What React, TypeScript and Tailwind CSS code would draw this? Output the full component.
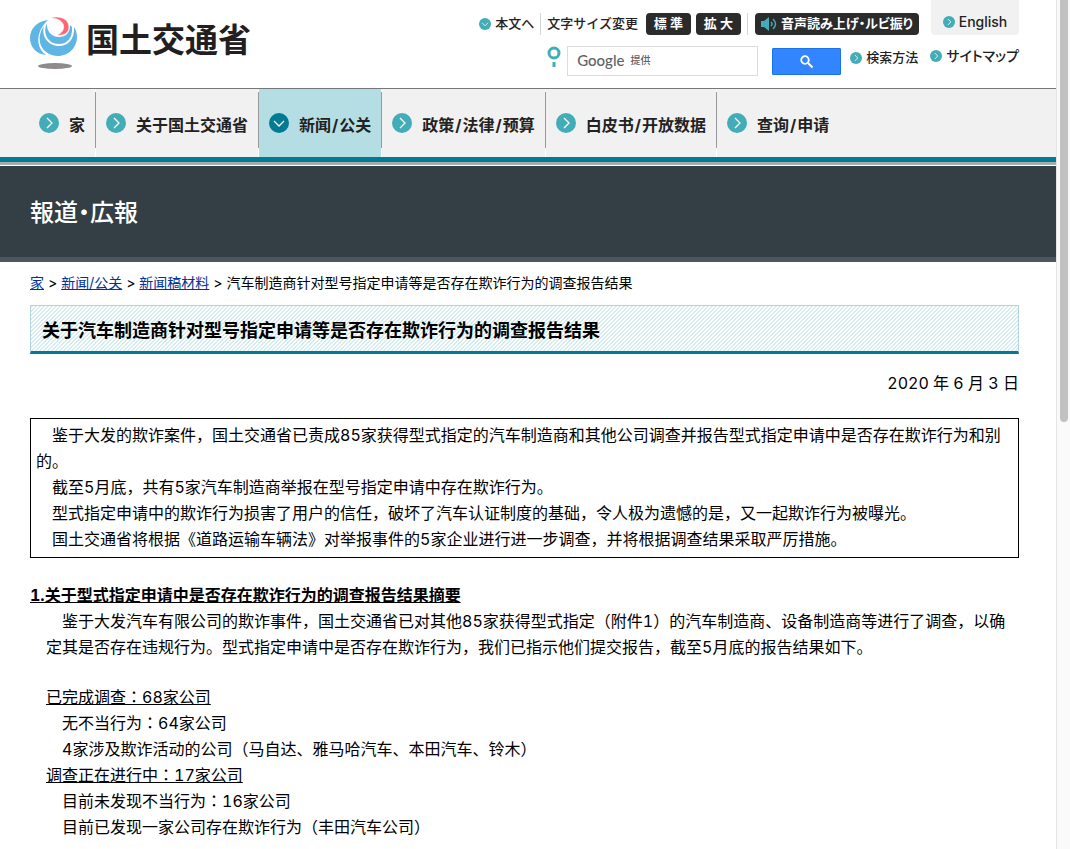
import React from "react";

type CircleIconProps = {
  size: number;
  down?: boolean;
  dark?: boolean;
};

const navItems = [
  { label: "家", active: false },
  { label: "关于国土交通省", active: false },
  { label: "新闻/公关", active: true },
  { label: "政策/法律/预算", active: false },
  { label: "白皮书/开放数据", active: false },
  { label: "查询/申请", active: false },
];

const breadcrumbs = ["家", "新闻/公关", "新闻稿材料"];

const noticeLines = [
  "鉴于大发的欺诈案件，国土交通省已责成85家获得型式指定的汽车制造商和其他公司调查并报告型式指定申请中是否存在欺诈行为和别的。",
  "截至5月底，共有5家汽车制造商举报在型号指定申请中存在欺诈行为。",
  "型式指定申请中的欺诈行为损害了用户的信任，破坏了汽车认证制度的基础，令人极为遗憾的是，又一起欺诈行为被曝光。",
  "国土交通省将根据《道路运输车辆法》对举报事件的5家企业进行进一步调查，并将根据调查结果采取严厉措施。",
];

const CircleIcon = ({ size, down, dark }: CircleIconProps) => {
  return (
    <svg
      width={size}
      height={size}
      viewBox="0 0 20 20"
      className="shrink-0"
      aria-hidden="true"
    >
      <circle cx="10" cy="10" r="10" fill={dark ? "#007b93" : "#42adb9"} />
      <path
        d={down ? "M5 8l5 5 5-5" : "M8 5l5 5-5 5"}
        fill="none"
        stroke="#fff"
        strokeWidth="1.3"
      />
    </svg>
  );
};

const Logo = () => {
  return (
    <a href="#" className="mt-4 flex items-start gap-2 text-[#231f20]">
      <svg width="48" height="54" viewBox="0 0 48 54" aria-hidden="true">
        <path
          d="M18 4C7 5 0 13 0 22c0 9 6 16 16 17C6 32 5 16 18 4z"
          fill="#5fb6e5"
        />
        <path
          d="M14 10C5 22 10 39 28 40c11 0 19-9 19-19 0-4-1-7-3-10 1 12-6 19-15 19C18 30 11 20 14 10z"
          fill="#5fb6e5"
        />
        <path
          d="M17 7c-5 10 1 21 12 21 8 0 14-6 13-17l-2-2c0 8-4 12-11 12-8 0-13-7-12-14z"
          fill="#5fb6e5"
        />
        <path
          d="M20 2C28-1 39 2 39 11c0 6-5 9-12 8 5-2 8-6 6-11-2-4-7-6-13-6z"
          fill="#ff6673"
          stroke="#fff"
          strokeWidth="0.6"
        />
        <ellipse cx="25" cy="50" rx="17" ry="3" fill="#8f8b8c" />
      </svg>
      <span className="text-[33px] leading-[48px] font-bold">国土交通省</span>
    </a>
  );
};

const HeaderTools = () => {
  return (
    <div className="flex flex-col text-[13px] font-medium">
      <div className="flex items-start justify-end">
        <div className="mt-3 flex h-6 items-center">
          <a href="#" className="flex items-center gap-1">
            <CircleIcon size={12} down />
            本文へ
          </a>
          <span className="mx-1.5 h-[22px] w-px bg-gray-300" />
          <span>文字サイズ変更</span>
          <button className="ml-2 h-[22px] w-[45px] rounded-sm bg-[#2b2b2b] font-bold text-white">
            標 準
          </button>
          <button className="ml-[5px] h-[22px] w-[45px] rounded-sm bg-[#2b2b2b] font-bold text-white">
            拡 大
          </button>
          <span className="mx-1.5 h-[22px] w-px bg-gray-300" />
          <button className="ml-px flex h-[22px] items-center gap-1 rounded-sm bg-[#2b2b2b] px-1.5 font-bold whitespace-nowrap text-white [font-feature-settings:'palt']">
            <svg width="16" height="14" viewBox="0 0 16 14" aria-hidden="true">
              <path d="M0 4h3l5-4v14L3 10H0z" fill="#42adb9" />
              <path
                d="M10 5q2 2 0 4M12 2q5 5 0 10"
                fill="none"
                stroke="#42adb9"
                strokeWidth="1.5"
              />
            </svg>
            音声読み上げ・ルビ振り
          </button>
        </div>
        <a
          href="#"
          className="ml-3 flex h-[35px] w-[88px] items-center justify-center gap-1 rounded-b-sm bg-[#f1f1f1] pt-2 text-sm"
        >
          <CircleIcon size={12} />
          English
        </a>
      </div>
      <form className="mt-2.5 flex items-start justify-end">
        <svg
          width="14"
          height="22"
          viewBox="0 0 14 22"
          className="mr-[6px]"
          aria-hidden="true"
        >
          <circle
            cx="7"
            cy="7"
            r="5"
            fill="none"
            stroke="#42adb9"
            strokeWidth="3"
          />
          <path d="M5.500 16h3v5h-3z" fill="#42adb9" />
        </svg>
        <label className="relative">
          <input
            type="text"
            aria-label="Google 提供"
            className="block h-[30px] w-[191px] border border-[#dadce0] bg-white px-2"
          />
          <span className="absolute top-1 left-2.5 flex items-center gap-1.5 text-[#5f6368]">
            <span className="font-['Lato'] text-[15px] leading-5">Google</span>
            <span className="text-[10px] leading-5">提供</span>
          </span>
        </label>
        <button
          type="button"
          aria-label="検索"
          className="mt-0.5 ml-3.5 flex h-[27px] w-[69px] items-center justify-center rounded-[1px] border border-[#1a73e8] bg-[#3385ff]"
        >
          <svg width="13" height="13" viewBox="0 0 13 13" aria-hidden="true">
            <circle
              cx="5"
              cy="5"
              r="3.800"
              fill="none"
              stroke="#fff"
              strokeWidth="1.800"
            />
            <path d="M8 8l4.500 4.500" stroke="#fff" strokeWidth="2" />
          </svg>
        </button>
        <a href="#" className="mt-0.5 ml-[9px] flex items-center gap-1">
          <CircleIcon size={12} />
          検索方法
        </a>
        <a
          href="#"
          className="ml-3 flex items-center gap-1 text-sm [font-feature-settings:'palt']"
        >
          <CircleIcon size={12} />
          サイトマップ
        </a>
      </form>
    </div>
  );
};

const NavBar = () => {
  return (
    <nav className="border-t border-[#777] bg-[#f1f1f1] pl-[29px]">
      <ul className="flex h-[68px]">
        {navItems.map(({ label, active }, index) => {
          return (
            <li key={label} className="flex">
              <a
                href="#"
                className={`flex items-center gap-2.5 px-2.5 font-bold whitespace-nowrap text-[#222] ${
                  active ? "bg-[#b5dee4]" : ""
                }`}
              >
                <CircleIcon size={20} down={active} dark={active} />
                <span className="pt-1">
                  {label.split("/").map((part, partIndex) => {
                    return (
                      <React.Fragment key={part}>
                        {partIndex > 0 && <span className="px-px">/</span>}
                        {part}
                      </React.Fragment>
                    );
                  })}
                </span>
              </a>
              {index < navItems.length - 1 && (
                <span className="flex w-px flex-col bg-white pt-[3px]">
                  <span className="h-14 bg-[#999]" />
                </span>
              )}
            </li>
          );
        })}
      </ul>
    </nav>
  );
};

// Full-width colon centred in its cell
const Colon = () => {
  return <span className="font-['Noto_Sans_CJK_JP'] leading-none">：</span>;
};

const Article = () => {
  return (
    <article className="leading-[26px] tabular-nums">
      <h2 className="mt-3 border border-b-[3px] border-[#b0d8dc] border-b-[#007b8f] bg-[linear-gradient(135deg,#d6edef_0%,#d6edef_35%,#fff_35%,#fff_50%,#d6edef_50%,#d6edef_85%,#fff_85%)] bg-size-[4px_4px] px-[11px] pt-3 pb-[7px] text-lg leading-[26px] font-bold">
        关于汽车制造商针对型号指定申请等是否存在欺诈行为的调查报告结果
      </h2>
      <p className="mt-4 text-right">2020 年 6 月 3 日</p>
      <div className="mt-[22px] border border-black px-[5px] pt-[3px] pb-[5px]">
        {noticeLines.map((line) => {
          return (
            <p key={line} className="indent-4">
              {line}
            </p>
          );
        })}
      </div>
      <h3 className="mt-6 font-bold underline">
        1.关于型式指定申请中是否存在欺诈行为的调查报告结果摘要
      </h3>
      <div className="pr-2 pl-4">
        <p className="indent-4">
          鉴于大发汽车有限公司的欺诈事件，国土交通省已对其他85家获得型式指定（附件1）的汽车制造商、设备制造商等进行了调查，以确定其是否存在违规行为。型式指定申请中是否存在欺诈行为，我们已指示他们提交报告，截至5月底的报告结果如下。
        </p>
        <h4 className="mt-6 underline">
          已完成调查
          <Colon />
          68家公司
        </h4>
        <ul className="pl-4">
          <li>
            无不当行为
            <Colon />
            64家公司
          </li>
          <li>4家涉及欺诈活动的公司（马自达、雅马哈汽车、本田汽车、铃木）</li>
        </ul>
        <h4 className="underline">
          调查正在进行中
          <Colon />
          17家公司
        </h4>
        <ul className="pl-4">
          <li>
            目前未发现不当行为
            <Colon />
            16家公司
          </li>
          <li>目前已发现一家公司存在欺诈行为（丰田汽车公司）</li>
        </ul>
      </div>
    </article>
  );
};

const App = () => {
  return (
    <div className="flex min-h-screen bg-white font-['Inter','Noto_Sans_CJK_SC',sans-serif] text-base text-black">
      <div className="min-w-0 flex-1">
        <header lang="ja" className="font-['Inter','Noto_Sans_CJK_JP',sans-serif]">
          <div className="flex h-[88px] items-start justify-between pr-[37px] pl-[30px] text-[#222]">
            <Logo />
            <HeaderTools />
          </div>
        </header>
        <NavBar />
        <div
          lang="ja"
          className="border-t-[5px] border-[#007b93] font-['Inter','Noto_Sans_CJK_JP',sans-serif]"
        >
          <div className="mb-px h-[3px] bg-[#a9abab]" />
          <div className="border-b-[5px] border-[#4a575e] bg-[#333f45] px-[30px] pt-[29px] pb-[26px]">
            <h1 className="text-2xl leading-9 font-medium text-white [font-feature-settings:'palt']">
              報道・広報
            </h1>
          </div>
        </div>
        <main className="pr-[37px] pl-[30px]">
          <p className="mt-[11px] text-sm leading-5">
            {breadcrumbs.map((crumb) => {
              return (
                <React.Fragment key={crumb}>
                  <a href="#" className="text-[#003399] underline">
                    {crumb}
                  </a>
                  {" > "}
                </React.Fragment>
              );
            })}
            汽车制造商针对型号指定申请等是否存在欺诈行为的调查报告结果
          </p>
          <Article />
        </main>
      </div>
      <div className="w-3.5 border-l border-[#e4e4e4] bg-[#fafafa] pl-[3px]">
        <div className="h-[422px] w-2 rounded-b-full bg-[#c1c1c1]" />
      </div>
    </div>
  );
};

export default App;
